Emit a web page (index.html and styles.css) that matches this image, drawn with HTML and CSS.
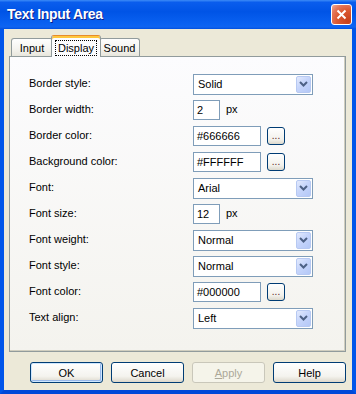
FILE: index.html
```html
<!DOCTYPE html>
<html>
<head>
<meta charset="utf-8">
<link rel="stylesheet" href="styles.css">
</head>
<body>
<div class="window">
  <div class="titlebar">
    <span class="title">Text Input Area</span>
    <span class="close"><svg width="11" height="11" viewBox="0 0 11 11"><path d="M1.5 1.5 L9.5 9.5 M9.5 1.5 L1.5 9.5" stroke="#fff" stroke-width="2" fill="none"/></svg></span>
  </div>
  <div class="frame">
    <div class="tabs">
      <div class="tab tab-input">Input</div>
      <div class="tab tab-display active"><span class="focus">Display</span></div>
      <div class="tab tab-sound">Sound</div>
    </div>
    <div class="panel">
      <div class="form">
        <span class="label">Border style:</span>
        <div class="ctrl"><div class="select"><span class="val">Solid</span><span class="drop"><svg width="9" height="6" viewBox="0 0 9 6"><path d="M1 1 L4.5 4.5 L8 1" stroke="#4D6185" stroke-width="2" fill="none"/></svg></span></div></div>

        <span class="label">Border width:</span>
        <div class="ctrl"><span class="input num">2</span><span class="unit">px</span></div>

        <span class="label">Border color:</span>
        <div class="ctrl"><span class="input color">#666666</span><span class="dots">...</span></div>

        <span class="label">Background color:</span>
        <div class="ctrl"><span class="input color">#FFFFFF</span><span class="dots">...</span></div>

        <span class="label">Font:</span>
        <div class="ctrl"><div class="select"><span class="val">Arial</span><span class="drop"><svg width="9" height="6" viewBox="0 0 9 6"><path d="M1 1 L4.5 4.5 L8 1" stroke="#4D6185" stroke-width="2" fill="none"/></svg></span></div></div>

        <span class="label">Font size:</span>
        <div class="ctrl"><span class="input num">12</span><span class="unit">px</span></div>

        <span class="label">Font weight:</span>
        <div class="ctrl"><div class="select"><span class="val">Normal</span><span class="drop"><svg width="9" height="6" viewBox="0 0 9 6"><path d="M1 1 L4.5 4.5 L8 1" stroke="#4D6185" stroke-width="2" fill="none"/></svg></span></div></div>

        <span class="label">Font style:</span>
        <div class="ctrl"><div class="select"><span class="val">Normal</span><span class="drop"><svg width="9" height="6" viewBox="0 0 9 6"><path d="M1 1 L4.5 4.5 L8 1" stroke="#4D6185" stroke-width="2" fill="none"/></svg></span></div></div>

        <span class="label">Font color:</span>
        <div class="ctrl"><span class="input color">#000000</span><span class="dots">...</span></div>

        <span class="label">Text align:</span>
        <div class="ctrl"><div class="select"><span class="val">Left</span><span class="drop"><svg width="9" height="6" viewBox="0 0 9 6"><path d="M1 1 L4.5 4.5 L8 1" stroke="#4D6185" stroke-width="2" fill="none"/></svg></span></div></div>
      </div>
    </div>
    <div class="buttons">
      <span class="btn default">OK</span>
      <span class="btn">Cancel</span>
      <span class="btn disabled"><u>A</u>pply</span>
      <span class="btn">Help</span>
    </div>
  </div>
</div>
</body>
</html>
```

FILE: styles.css
```css
html, body {
  margin: 0;
  padding: 0;
  background: #ECE9D8;
}
.window {
  width: 356px;
  height: 394px;
  display: flex;
  flex-direction: column;
  font-family: "Liberation Sans", Arial, sans-serif;
  font-size: 11px;
  color: #000;
}
.titlebar {
  height: 29px;
  flex: none;
  display: flex;
  align-items: center;
  justify-content: space-between;
  padding: 0 4px 0 7px;
  background: linear-gradient(to bottom, #3d8cf7 0%, #0a5ded 8%, #0054e6 40%, #0a62f2 85%, #1064f0 93%, #0050e0 100%);
}
.title {
  color: #fff;
  font-weight: bold;
  font-size: 14px;
  letter-spacing: -0.3px;
  text-shadow: 1px 1px #0a1e8a;
  margin-top: -1px;
}
.close {
  width: 21px;
  height: 21px;
  box-sizing: border-box;
  border: 1px solid #fff;
  border-radius: 3px;
  display: flex;
  align-items: center;
  justify-content: center;
  background: radial-gradient(circle at 85% 85%, #c8401a 0%, #dc5a33 50%, #e4775a 75%, #f2ad98 100%);
}
.frame {
  flex: 1;
  display: flex;
  flex-direction: column;
  background: #ECE9D8;
  border-left: 4px solid #0055EA;
  border-right: 4px solid #0055EA;
  border-bottom: 4px solid #0048D8;
  padding: 6px 6px 7px 5px;
}
.tabs {
  height: 21px;
  display: flex;
  align-items: flex-end;
  padding-left: 2px;
}
.tab {
  box-sizing: border-box;
  height: 18px;
  border: 1px solid #919B9C;
  border-bottom: none;
  border-radius: 3px 3px 0 0;
  background: linear-gradient(to bottom, #fefefe, #f4f3ee 60%, #e8e6dd);
  display: flex;
  align-items: center;
  justify-content: center;
  padding-top: 1px;
}
.tab-input { width: 42px; }
.tab-sound { width: 41px; margin-left: -2px; }
.tab-display {
  width: 50px;
  margin-left: -2px;
  height: 22px;
  margin-bottom: -1px;
  position: relative;
  z-index: 1;
  background: #FCFCFE;
  border-top: 1px solid #E68B2C;
  box-shadow: inset 0 2px #FFC73C;
  padding-top: 2px;
}
.focus {
  outline: 1px dotted #000;
  outline-offset: 0;
  padding: 1px 2px;
  line-height: 12px;
}
.panel {
  flex: none;
  height: 296px;
  box-sizing: border-box;
  border: 1px solid #919B9C;
  background: linear-gradient(to bottom, #FCFCFE, #F4F3EE);
  box-shadow: inset -1px -1px #D0CEBF;
}
.form {
  display: grid;
  grid-template-columns: 164px auto;
  grid-auto-rows: 26px;
  align-items: center;
  padding: 14px 0 0 19px;
}
.label {
  margin-top: -2px;
}
.ctrl {
  display: flex;
  align-items: center;
}
.select {
  width: 120px;
  height: 21px;
  box-sizing: border-box;
  border: 1px solid #7F9DB9;
  background: #fff;
  display: flex;
  align-items: center;
  justify-content: space-between;
  padding: 1px;
}
.val {
  padding-left: 3px;
}
.drop {
  width: 15px;
  height: 17px;
  box-sizing: border-box;
  border: 1px solid #B7C9F2;
  border-radius: 2px;
  background: linear-gradient(135deg, #E3EAFD 0%, #C6D5FB 45%, #B4C8F7 100%);
  display: flex;
  align-items: center;
  justify-content: center;
}
.input {
  height: 20px;
  box-sizing: border-box;
  border: 1px solid #7F9DB9;
  background: #fff;
  display: flex;
  align-items: center;
  padding-left: 3px;
}
.num { width: 27px; }
.color { width: 68px; }
.unit {
  margin-left: 6px;
  margin-top: -2px;
}
.dots {
  margin-left: 6px;
  width: 18px;
  height: 18px;
  box-sizing: border-box;
  border: 1px solid #003C74;
  border-radius: 3px;
  background: linear-gradient(to bottom, #fff, #F3F2EC 70%, #DCD8CC);
  display: flex;
  align-items: flex-end;
  justify-content: center;
  line-height: 12px;
  padding-bottom: 2px;
  font-size: 10px;
  color: #5a1a1a;
}
.buttons {
  display: flex;
  justify-content: flex-end;
  gap: 8px;
  margin-top: 10px;
}
.btn {
  width: 73px;
  height: 21px;
  box-sizing: border-box;
  border: 1px solid #003C74;
  border-radius: 3px;
  background: linear-gradient(to bottom, #fff, #F4F3EE 70%, #DCD7CA);
  display: flex;
  align-items: center;
  justify-content: center;
}
.btn.default {
  box-shadow: inset 0 0 0 1px #CEE7FF, inset -1px -1px 0 1px #98B8EA;
}
.btn.disabled {
  border-color: #C9C7BA;
  background: #F5F4EA;
  color: #ACA899;
}
```
